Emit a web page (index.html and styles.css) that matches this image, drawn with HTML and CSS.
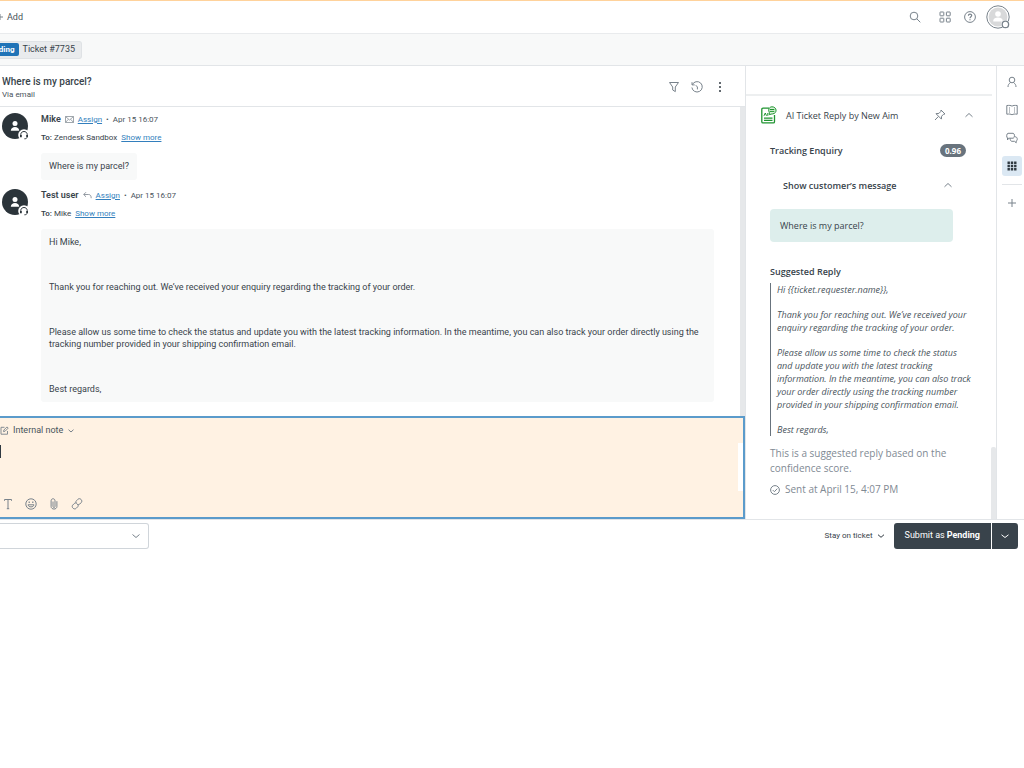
FILE: index.html
```html
<!DOCTYPE html>
<html lang="en">
<head>
    <meta charset="UTF-8">
    <meta name="viewport" content="width=device-width, initial-scale=1.0">
    <title>Ticket #7735</title>
    <link rel="stylesheet" href="styles.css">
</head>
<body>

    <header class="topbar">
        <button class="add-btn"><svg width="8" height="8" viewBox="0 0 8 8"><path d="M4 1v6M1 4h6"/></svg>Add</button>
        <nav class="top-icons">
            <button class="search-btn" aria-label="Search"><svg width="12" height="12" viewBox="0 0 12 12"><circle cx="5" cy="5" r="3.8"/><path d="M7.8 7.8l3.5 3.5"/></svg></button>
            <button aria-label="Products"><svg width="12" height="12" viewBox="0 0 12 12"><rect x="1" y="1" width="3.8" height="3.8" rx=".4"/><rect x="7.4" y="1" width="3.8" height="3.8" rx=".4"/><rect x="1" y="7.2" width="3.8" height="3.8" rx=".4"/><rect x="7.4" y="7.2" width="3.8" height="3.8" rx=".4"/></svg></button>
            <button aria-label="Help"><svg width="12" height="12" viewBox="0 0 12 12"><circle cx="6" cy="6" r="5.4"/><path d="M4.4 4.8c0-2.2 3.3-2.1 3.3-.2C7.7 5.8 6 5.8 6 7.2M6 8.3v1" stroke-width="1.2"/></svg></button>
            <button class="profile" aria-label="Profile"><svg width="24" height="24" viewBox="0 0 24 24"><circle cx="12" cy="12" r="11.2" fill="#fff"/><circle cx="12" cy="12" r="9.4" fill="#d8d9da" stroke="none"/><circle cx="12" cy="9" r="2.8" fill="#fff" stroke="none"/><path d="M7.3 16.6v-1c0-4 9.4-4 9.4 0v1z" fill="#fff" stroke="none"/><circle cx="19.4" cy="19.4" r="4.5" fill="#fff" stroke="none"/><circle cx="19.4" cy="19.4" r="3.2" fill="#fff" stroke-width="1.3"/></svg></button>
        </nav>
    </header>

    <div class="tabs">
        <div class="tab"><span class="status">Pending</span><span class="tab-name">Ticket #7735</span></div>
    </div>

    <main class="workspace">
        <section class="ticket">
            <div class="ticket-head">
                <div>
                    <h1>Where is my parcel?</h1>
                    <p>Via email</p>
                </div>
                <div class="ticket-tools">
                    <button aria-label="Filter"><svg width="12" height="12" viewBox="0 0 12 12"><path d="M1.5 1.5h9L7.3 6v4.6L4.7 9V6z"/></svg></button>
                    <button aria-label="History"><svg width="12" height="12" viewBox="0 0 12 12"><path d="M1.3 3.7A5.2 5.2 0 1 1 .9 6.5M1 1.2v2.7h2.7M4.8 4.2L6.4 6v2.4"/></svg></button>
                    <button aria-label="More"><svg class="solid" width="12" height="12" viewBox="0 0 12 12"><circle cx="6" cy="2" r="1"/><circle cx="6" cy="6" r="1"/><circle cx="6" cy="10" r="1"/></svg></button>
                </div>
            </div>

            <div class="messages">
                <article class="message">
                    <svg class="avatar" width="28" height="28" viewBox="0 0 28 28"><circle cx="13" cy="13" r="13" fill="#2b343a"/><circle cx="13" cy="10.5" r="2.5" fill="#fff"/><path d="M8.8 17.8c0-5 8.4-5 8.4 0z" fill="#fff"/><circle cx="22" cy="22" r="5.8" fill="#fff"/><path d="M18.8 22.3v-.8c0-4 6.4-4 6.4 0v.8" fill="none" stroke="#2b343a"/><path d="M18.9 22v2.2M25.1 22v2.2" stroke="#2b343a" stroke-width="1.8"/><path d="M25 24.5c-.4 1-1.3 1.3-2.6 1.3" fill="none" stroke="#2b343a"/></svg>
                    <div class="message-main">
                        <div class="meta"><strong>Mike</strong><svg width="9" height="9" viewBox="0 0 9 9"><path d="M.5 1.5h8v6h-8zM.7 1.7L4.5 5l3.8-3.3M.7 7.3l2.6-3M8.3 7.3l-2.6-3" stroke-width=".7"/></svg><a href="#">Assign</a><span class="dot">•</span><time>Apr 15 16:07</time></div>
                        <div class="recipients"><span><b>To:</b> Zendesk Sandbox</span><a href="#">Show more</a></div>
                        <div class="bubble short">Where is my parcel?</div>
                    </div>
                </article>
                <article class="message">
                    <svg class="avatar" width="28" height="28" viewBox="0 0 28 28"><circle cx="13" cy="13" r="13" fill="#2b343a"/><circle cx="13" cy="10.5" r="2.5" fill="#fff"/><path d="M8.8 17.8c0-5 8.4-5 8.4 0z" fill="#fff"/><circle cx="22" cy="22" r="5.8" fill="#fff"/><path d="M18.8 22.3v-.8c0-4 6.4-4 6.4 0v.8" fill="none" stroke="#2b343a"/><path d="M18.9 22v2.2M25.1 22v2.2" stroke="#2b343a" stroke-width="1.8"/><path d="M25 24.5c-.4 1-1.3 1.3-2.6 1.3" fill="none" stroke="#2b343a"/></svg>
                    <div class="message-main">
                        <div class="meta"><strong>Test user</strong><svg width="9" height="9" viewBox="0 0 9 9"><path d="M3 1.2L.7 3.5 3 5.8M.8 3.5h4.7c2 0 2.7 1.5 2.7 3.7" stroke-width=".8"/></svg><a href="#">Assign</a><span class="dot">•</span><time>Apr 15 16:07</time></div>
                        <div class="recipients"><span><b>To:</b> Mike</span><a href="#">Show more</a></div>
                        <div class="bubble">
                            <p>Hi Mike,</p>
                            <p>Thank you for reaching out. We’ve received your enquiry regarding the tracking of your order.</p>
                            <p>Please allow us some time to check the status and update you with the latest tracking information. In the meantime, you can also track your order directly using the tracking number provided in your shipping confirmation email.</p>
                            <p>Best regards,</p>
                        </div>
                    </div>
                </article>
            </div>

            <div class="composer">
                <button class="note-type"><svg width="9" height="9" viewBox="0 0 9 9"><path d="M4.5 1.3H1v6.9h6.5V5M3.5 5.6l.4-1.6L7 .9l1.2 1.2L5.1 5.2z" stroke-width=".9"/></svg>Internal note<svg class="caret" width="8" height="8" viewBox="0 0 8 8"><path d="M1.5 2.7L4 5l2.5-2.3"/></svg></button>
                <div class="editor"><textarea aria-label="Internal note"></textarea><span class="cursor"></span></div>
                <div class="format">
                    <button aria-label="Text"><svg width="12" height="12" viewBox="0 0 12 12"><path d="M2.5 2.8V1.5h7v1.3M6 1.5v9.2M4.800 10.700h2.400"/></svg></button>
                    <button aria-label="Emoji"><svg width="12" height="12" viewBox="0 0 12 12"><circle cx="6" cy="6" r="5.2"/><path d="M3 6.8c.6 2.8 5.4 2.8 6 0z"/><path d="M4.2 3.5v1.4M7.8 3.5v1.4" stroke-width="1.2"/></svg></button>
                    <button aria-label="Attach"><svg width="12" height="12" viewBox="0 0 12 12"><path d="M5 3.5v5c0 1.3 2 1.3 2 0V2.8c0-2.7-3.9-2.7-3.9 0v5.7c0 3.4 5.8 3.4 5.8 0V3.2"/></svg></button>
                    <button aria-label="Link"><svg width="12" height="12" viewBox="0 0 12 12"><path d="M5.4 5.2c-.8-1-.6-1.8.1-2.5l1.400-1.400c2-2 5.300 1.300 3.300 3.300L8.800 6c-.9.9-2 .8-2.800 0M6.600 6.200c.9 1 .7 2 0 2.700l-1.400 1.400c-2 2-5.400-1.300-3.400-3.300l1.400-1.400c.9-.9 2-.8 2.800 0"/></svg></button>
                </div>
            </div>
        </section>

        <aside class="apps">
            <div class="apps-blank"></div>
            <div class="app-head">
                <svg class="app-logo" width="16" height="18" viewBox="0 0 16 18"><path d="M8 2.2H2c-.7 0-1.2.5-1.2 1.2v12.300c0 .7.5 1.200 1.200 1.200h10.300c.7 0 1.200-.5 1.200-1.200V9" stroke-width="1.300"/><path d="M3 12.200h8.500M3 14.400h8.500" stroke-width="1.200"/><path d="M3 9.800L4.300 7l1.200 2.800M6.800 7v2.800" stroke-width="1"/><path d="M8.300 8.700V6.300C6.600 3.400 8.500.8 11 .8c5 0 5.500 6.400.8 7.100-1.300.2-2 .1-3.500.8z" fill="#d8f0d8"/><path d="M8.800 3.500h4.500M8.800 5.400h4.500"/></svg>
                <h2>AI Ticket Reply by New Aim</h2>
                <button aria-label="Pin"><svg width="12" height="12" viewBox="0 0 12 12"><path d="M7 1l4 4-1.4.2-2 2-.2 2.900L2 4.700l2.900-.3 2-2zM4.400 7.500L1 11"/></svg></button>
                <button aria-label="Collapse app"><svg width="10" height="10" viewBox="0 0 10 10"><path d="M1.5 6.8L5 3.500l3.500 3.300"/></svg></button>
            </div>
            <div class="app-body">
                <div class="topic"><h3>Tracking Enquiry</h3><span class="score">0.96</span></div>
                <button class="toggle">Show customer’s message<svg width="10" height="10" viewBox="0 0 10 10"><path d="M1.5 6.8L5 3.500l3.500 3.300"/></svg></button>
                <div class="customer-msg">Where is my parcel?</div>
                <h3>Suggested Reply</h3>
                <blockquote>
                    <p>Hi {{ticket.requester.name}},</p>
                    <p>Thank you for reaching out. We’ve received your enquiry regarding the tracking of your order.</p>
                    <p>Please allow us some time to check the status and update you with the latest tracking information. In the meantime, you can also track your order directly using the tracking number provided in your shipping confirmation email.</p>
                    <p>Best regards,</p>
                </blockquote>
                <p class="hint">This is a suggested reply based on the confidence score.</p>
                <p class="sent"><svg width="10" height="10" viewBox="0 0 10 10"><circle cx="5" cy="5" r="4.4"/><path d="M2.800 5.100l1.600 1.600L7.300 3.600"/></svg>Sent at April 15, 4:07 PM</p>
            </div>
        </aside>

        <nav class="rail">
            <button aria-label="User"><svg width="12" height="12" viewBox="0 0 12 12"><circle cx="6" cy="4" r="2.8"/><path d="M2 11c0-2.300 1-3.300 2.600-4.600M10 11c0-2.300-1-3.300-2.600-4.600"/></svg></button>
            <button aria-label="Knowledge"><svg width="12" height="12" viewBox="0 0 12 12"><path d="M6 2.200C5 1.300 3 1.300.8 1.500v8.700c2.200-.3 4.200-.2 5.200.6 1-.8 3-.9 5.200-.6V1.500C9 1.300 7 1.300 6 2.200z"/><path d="M3 4h1M3 6h1M3 8h1M8 4h1M8 6h1M8 8h1"/></svg></button>
            <button aria-label="Side conversations"><svg width="12" height="12" viewBox="0 0 12 12"><path d="M2.500 6.200L1.500 8V6C.3 5.400.4 1.500 2 1.300h5.200c1.700.2 1.700 4.600 0 4.900zM9 4.800c2.500-.2 3 3.400 1.200 4.300v1.700L8.500 9.300H6c-1.300-.1-1.900-1-1.800-2.900"/></svg></button>
            <button class="active" aria-label="Apps"><svg class="solid" width="12" height="12" viewBox="0 0 12 12"><path d="M1.500 1.500h2.400v2.400H1.500zM4.800 1.500h2.400v2.400H4.800zM8.100 1.500h2.400v2.400H8.100zM1.500 4.800h2.400v2.400H1.500zM4.800 4.800h2.400v2.400H4.800zM8.100 4.800h2.400v2.400H8.100zM1.500 8.100h2.400v2.400H1.500zM4.800 8.100h2.400v2.400H4.800zM8.100 8.100h2.400v2.400H8.100z"/></svg></button>
            <hr>
            <button aria-label="Add app"><svg width="12" height="12" viewBox="0 0 12 12"><path d="M6 2v8M2 6h8"/></svg></button>
        </nav>
    </main>

    <footer class="actions">
        <div class="macro">
            <select aria-label="Apply macro"><option></option></select>
            <svg width="10" height="10" viewBox="0 0 10 10"><path d="M1.500 3.500L5 6.500l3.500-3"/></svg>
        </div>
        <button class="stay">Stay on ticket<svg width="8" height="8" viewBox="0 0 8 8"><path d="M1 2.700L4 5.300l3-2.600"/></svg></button>
        <div class="submit">
            <button>Submit as <b>Pending</b></button>
            <button class="submit-more" aria-label="Submit options"><svg width="10" height="10" viewBox="0 0 10 10"><path d="M1.500 3.800L5 6.500l3.500-2.700"/></svg></button>
        </div>
    </footer>

</body>
</html>
```
FILE: styles.css
```css
* { box-sizing: border-box; }
body { margin: 0; font: 9px/13px Roboto, "Open Sans", sans-serif; color: #38434b; background: #fff; }
h1, h2, h3, p, blockquote { margin: 0; }
button { display: flex; align-items: center; justify-content: center; padding: 0; border: none; background: none; font: inherit; color: inherit; cursor: pointer; }
svg { flex: none; fill: none; stroke: #78828b; }
.solid { fill: #2f3941; stroke: none; }
a { color: #337fbd; }

.topbar { display: flex; justify-content: space-between; align-items: center; height: 34px; border-top: 1px solid #ffd29b; border-bottom: 1px solid #e9ebed; }
.add-btn { gap: 3px; margin-left: -4px; color: #49545c; }
.top-icons { display: flex; align-items: center; gap: 13px; padding-right: 14px; }
.search-btn { margin-right: 5px; }
.profile { margin-left: -3px; }

.tabs { display: flex; align-items: center; height: 32px; background: #f8f9f9; border-bottom: 1px solid #e2e5e8; }
.tab { display: flex; justify-content: flex-end; align-items: center; gap: 4px; width: 82px; height: 18px; padding-right: 6px; overflow: hidden; background: #e9ebed; border: 1px solid #dfe2e5; border-left: none; border-radius: 0 3px 3px 0; }
.status { padding: 0 4px; background: #1f73b7; border-radius: 2px; color: #fff; font-size: 8px; font-weight: 700; }
.tab-name { white-space: nowrap; }

.workspace { display: grid; grid-template-columns: minmax(0, 1fr) 252px 27px; }
.ticket { display: flex; flex-direction: column; }
.ticket-head { display: flex; justify-content: space-between; align-items: center; height: 41px; padding: 1px 19px 0 2px; border-bottom: 1px solid #e2e5e8; }
.ticket-head h1 { font-size: 10px; line-height: 15px; font-weight: 500; }
.ticket-head p { font-size: 8px; line-height: 11px; color: #49545c; }
.ticket-tools { display: flex; gap: 11px; }

.messages { flex: 1; display: flex; flex-direction: column; gap: 9px; padding: 6px 26px 14px 2px; border-right: 5px solid #e6e8ea; }
.message { display: flex; gap: 11px; }
.avatar { stroke: none; }
.message-main { flex: 1; }
.meta, .recipients { display: flex; align-items: center; gap: 4px; font-size: 8px; }
.meta strong { font-size: 9px; font-weight: 600; }
.meta .dot, .meta time { color: #49545c; }
.recipients { margin: 5px 0 9px; }
.recipients b { font-weight: 600; }
.bubble { padding: 7px 8px; background: #f8f9f9; border-radius: 3px; }
.bubble.short { width: fit-content; }
.bubble p { line-height: 12px; }
.bubble p + p { margin-top: 33px; }

.composer { border: 2px solid #5b9bcb; border-left: none; background: #fff2e3; }
.note-type { gap: 4px; height: 25px; color: #49545c; }
.editor { position: relative; height: 48px; }
.editor textarea { display: block; width: 100%; height: 100%; padding: 2px; border: none; border-right: 5px solid #fff; outline: none; resize: none; background: none; font: inherit; }
.cursor { position: absolute; left: 0; top: 2px; width: 1px; height: 13px; background: #2f3941; }
.format { display: flex; align-items: center; gap: 11px; height: 26px; padding-left: 2px; }

.apps { position: relative; border-left: 1px solid #e2e5e8; border-right: 1px solid #e2e5e8; font-family: "Open Sans", "Noto Sans", sans-serif; }
.apps::after { content: ""; position: absolute; right: 0; bottom: 0; width: 5px; height: 72px; border-radius: 2px 2px 0 0; background: #e6e8ea; }
.apps-blank { height: 30px; margin-right: 4px; border-bottom: 2px solid #edeff0; }
.app-head { display: flex; align-items: center; height: 38px; padding: 0 22px 0 15px; gap: 18px; }
.app-head h2 { flex: 1; font-size: 9px; font-weight: 400; margin-left: -9px; }
.app-logo { stroke: #1f9430; }
.app-body { padding: 10px 24px 0; }
.app-body h3 { font-size: 9px; font-weight: 600; }
.topic { display: flex; justify-content: space-between; align-items: center; padding-right: 6px; }
.score { padding: 0 5px; border-radius: 7px; background: #68737d; color: #fff; font-size: 8px; font-weight: 700; }
.toggle { justify-content: space-between; width: 100%; height: 22px; margin: 17px 0 13px; padding: 0 19px 0 13px; font-weight: 600; }
.customer-msg { margin: 0 19px 23px 0; padding: 10px; border-radius: 4px; background: #ddeeec; }
blockquote { margin: 5px 0 10px; padding-left: 6px; border-left: 1px solid #68737d; font-style: italic; color: #49545c; }
blockquote p + p { margin-top: 12px; }
.hint, .sent { font-size: 10px; line-height: 15px; color: #7f8a94; }
.sent { display: flex; align-items: center; gap: 5px; margin-top: 6px; }

.rail { display: flex; flex-direction: column; align-items: center; gap: 8px; padding: 6px 0 0 2px; }
.rail button { width: 20px; height: 20px; border-radius: 3px; }
.rail .active { background: #dbe8f3; }
.rail hr { width: 20px; margin: 0; border: none; border-top: 1px solid #e2e5e8; }

.actions { display: flex; align-items: center; height: 32px; padding-right: 6px; border-top: 1px solid #e2e5e8; }
.macro { display: flex; align-items: center; position: relative; margin-right: auto; }
.macro select { width: 149px; height: 26px; appearance: none; border: 1px solid #d0d5da; border-left: none; border-radius: 0 3px 3px 0; background: #fff; font: inherit; }
.macro svg { position: absolute; right: 8px; pointer-events: none; }
.stay { gap: 4px; margin-right: 9px; font-size: 8px; }
.stay svg { stroke: #2f3941; }
.submit { display: flex; gap: 1px; }
.submit button { height: 26px; padding: 0 11px; border-radius: 3px 0 0 3px; background: #39434b; color: #fff; }
.submit b { margin-left: 2px; font-weight: 700; }
.submit .submit-more { padding: 0 8px; border-radius: 0 3px 3px 0; }
.submit svg { stroke: #fff; }
```
